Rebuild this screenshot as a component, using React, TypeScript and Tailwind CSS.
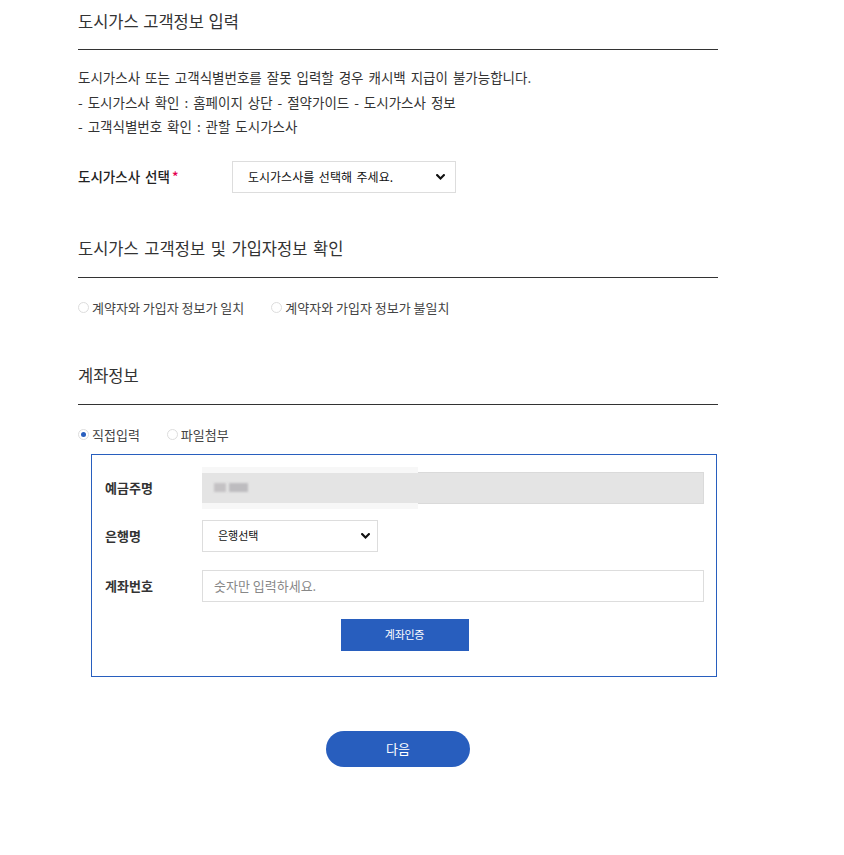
import { useState } from "react";

const font = { fontFamily: '"Noto Sans CJK KR", "Noto Sans", sans-serif' };

function Chevron() {
  return (
    <svg className="w-[9px] h-[6px]" viewBox="0 0 9 6" fill="none">
      <path d="M1.1 1.1L4.5 4.5l3.4-3.4" stroke="#111" strokeWidth={2.1} strokeLinecap="square" />
    </svg>
  );
}

function Radio({ checked, label, onClick }: { checked: boolean; label: string; onClick: () => void }) {
  return (
    <button
      onClick={onClick}
      className="flex items-center gap-[3px] text-[13px] leading-[20px] text-[#444] [word-spacing:normal]"
    >
      <span className="w-[11px] h-[11px] rounded-full border border-[#ddd] bg-white flex items-center justify-center">
        {checked && <span className="w-[5px] h-[5px] rounded-full bg-[#285ebe]" />}
      </span>
      {label}
    </button>
  );
}

function SectionTitle({ children }: { children: string }) {
  return (
    <h2 className="text-[16.5px] leading-[26px] text-[#333] pb-[16px] border-b border-[#333] font-normal">
      {children}
    </h2>
  );
}

export default function App() {
  const [match, setMatch] = useState<"yes" | "no" | null>(null);
  const [mode, setMode] = useState<"direct" | "file">("direct");

  return (
    <div className="min-h-[855px] bg-white [word-spacing:0.12em]" style={font}>
      <div className="w-[640px] ml-[78px] pt-[8px] text-[#333]">
        <h2 className="text-[16.5px] leading-[26px] pb-[15px] border-b border-[#333] [word-spacing:0.05em]">
          도시가스 고객정보 입력
        </h2>

        <div className="mt-[15px] text-[13.5px] leading-[24.5px] text-[#333]">
          <p>도시가스사 또는 고객식별번호를 잘못 입력할 경우 캐시백 지급이 불가능합니다.</p>
          <p>- 도시가스사 확인 : 홈페이지 상단 - 절약가이드 - 도시가스사 정보</p>
          <p>- 고객식별번호 확인 : 관할 도시가스사</p>
        </div>

        <div className="mt-[22px] flex items-center">
          <label className="w-[154px] text-[13.5px] font-medium text-[#222]">
            도시가스사 선택<span className="text-[#e5004f] ml-[2px]">*</span>
          </label>
          <div className="w-[224px] h-[32px] border border-[#ddd] flex items-center pl-[15px] pr-[10px] justify-between">
            <span className="text-[12px] text-[#111]">도시가스사를 선택해 주세요.</span>
            <Chevron />
          </div>
        </div>

        <div className="mt-[42px]">
          <SectionTitle>도시가스 고객정보 및 가입자정보 확인</SectionTitle>
        </div>
        <div className="mt-[20px] flex gap-[27px]">
          <Radio checked={match === "yes"} label="계약자와 가입자 정보가 일치" onClick={() => setMatch("yes")} />
          <Radio checked={match === "no"} label="계약자와 가입자 정보가 불일치" onClick={() => setMatch("no")} />
        </div>

        <div className="mt-[44px]">
          <SectionTitle>계좌정보</SectionTitle>
        </div>
        <div className="mt-[20px] flex gap-[27px]">
          <Radio checked={mode === "direct"} label="직접입력" onClick={() => setMode("direct")} />
          <Radio checked={mode === "file"} label="파일첨부" onClick={() => setMode("file")} />
        </div>

        <div className="mt-[9px] ml-[13px] w-[626px] border border-[#285ebe] pt-[17px] pb-[25px] pl-[13px] pr-[12px]">
          <div className="flex items-center">
            <span className="w-[97px] text-[13px] font-bold text-[#333]">예금주명</span>
            <div className="relative flex-1 h-[32px] bg-[#e4e4e4] border border-[#dadada]">
              <div className="absolute left-[-1px] top-[-6px] w-[216px] h-[42px] bg-[#f7f7f7]">
                <div className="mt-[6px] h-[30px] bg-[#e4e4e4] flex items-center pl-[12px] gap-[3px]">
                  <span className="w-[12px] h-[9px] bg-[#c4c2c4] blur-[1px]" />
                  <span className="w-[19px] h-[9px] bg-[#bdbcbf] blur-[1px]" />
                </div>
              </div>
            </div>
          </div>

          <div className="flex items-center mt-[16px]">
            <span className="w-[97px] text-[13px] font-bold text-[#333]">은행명</span>
            <div className="w-[176px] h-[32px] border border-[#ddd] flex items-center justify-between pl-[15px] pr-[7px]">
              <span className="text-[11px] text-[#111]">은행선택</span>
              <Chevron />
            </div>
          </div>

          <div className="flex items-center mt-[18px]">
            <span className="w-[97px] text-[13px] font-bold text-[#333]">계좌번호</span>
            <input
              className="flex-1 h-[32px] border border-[#ddd] px-[11px] text-[13px] outline-none placeholder-[#888] [word-spacing:normal]"
              placeholder="숫자만 입력하세요."
              style={font}
            />
          </div>

          <div className="flex justify-center mt-[17px]">
            <button className="w-[128px] h-[32px] bg-[#285ebe] text-white text-[11px] tracking-[-0.3px]">
              계좌인증
            </button>
          </div>
        </div>

        <div className="flex justify-center mt-[54px]">
          <button className="w-[144px] h-[36px] rounded-full bg-[#285ebe] text-white text-[13px]">
            다음
          </button>
        </div>
      </div>
    </div>
  );
}
